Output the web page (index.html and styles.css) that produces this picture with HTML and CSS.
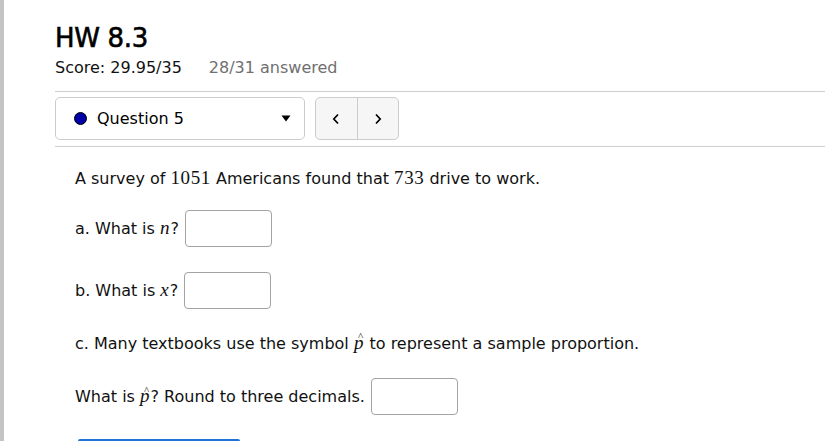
FILE: index.html
```html
<!DOCTYPE html>
<html lang="en">
<head>
<meta charset="utf-8">
<title>HW 8.3</title>
<link rel="stylesheet" href="styles.css">
</head>
<body>
<div class="frame">
  <div class="sidebar"></div>
  <main class="page">
    <h1 class="title">HW 8.3</h1>
    <div class="score">Score: 29.95/35<span class="answered">28/31 answered</span></div>
    <hr class="rule">
    <div class="qnav">
      <div class="qselect">
        <span class="dot"></span>
        <span class="qlabel">Question 5</span>
        <svg class="caret" width="10" height="7" viewBox="0 0 10 7"><polygon points="0.5,0.5 9.5,0.5 5,6.5" fill="#000"/></svg>
      </div>
      <div class="arrows">
        <button class="arrow" type="button" aria-label="Previous"><svg width="8" height="12" viewBox="0 0 8 12"><polyline points="6,1.5 1.8,6 6,10.5" fill="none" stroke="#000" stroke-width="1.7"/></svg></button>
        <button class="arrow arrow-next" type="button" aria-label="Next"><svg width="8" height="12" viewBox="0 0 8 12"><polyline points="2,1.5 6.2,6 2,10.5" fill="none" stroke="#000" stroke-width="1.7"/></svg></button>
      </div>
    </div>
    <hr class="rule rule-2">
    <div class="question">
      <p class="line first">A survey of <span class="num">1051</span> Americans found that <span class="num">733</span> drive to work.</p>
      <div class="row row-a"><span>a. What is <span class="mi">n</span>?</span><input class="answer" type="text"></div>
      <div class="row row-b"><span>b. What is <span class="mi">x</span>?</span><input class="answer" type="text"></div>
      <p class="line row-c">c. Many textbooks use the symbol <span class="mi hat">p</span> to represent a sample proportion.</p>
      <div class="row row-d"><span>What is <span class="mi hat">p</span>? Round to three decimals.</span><input class="answer" type="text"></div>
      <button class="submit" type="button"></button>
    </div>
  </main>
</div>
</body>
</html>
```
FILE: styles.css
```css
html, body {
  margin: 0;
  padding: 0;
  background: #fff;
}
body {
  width: 825px;
  height: 441px;
  overflow: hidden;
  font-family: "DejaVu Sans", sans-serif;
  font-size: 16px;
  line-height: 20px;
  color: #111;
}
.frame {
  display: flex;
  height: 441px;
  overflow: hidden;
}
.sidebar {
  width: 4px;
  flex: none;
  background: #c4c4c4;
}
.page {
  flex: 1;
  padding-left: 51px;
  overflow: hidden;
}
.title {
  margin: 23px 0 0;
  font-size: 26px;
  line-height: 30px;
  font-weight: normal;
  color: #000;
  -webkit-text-stroke: 0.6px #000;
  letter-spacing: -0.3px;
}
.score {
  margin-top: 5px;
  line-height: 20px;
  color: #111;
}
.answered {
  margin-left: 27px;
  color: #707070;
}
.rule {
  border: 0;
  border-top: 1px solid #cfcfcf;
  height: 0;
  margin: 13px 0 0;
}
.rule-2 {
  margin-top: 6px;
}
.qnav {
  margin-top: 5px;
  display: flex;
  gap: 10px;
  height: 43px;
}
.qselect {
  width: 250px;
  box-sizing: border-box;
  display: flex;
  align-items: center;
  padding: 0 13px 0 18px;
  border: 1px solid #cccccc;
  border-radius: 5px;
  background: #fff;
}
.dot {
  width: 11px;
  height: 11px;
  border-radius: 50%;
  background: #0000a6;
  border: 1px solid #000;
  margin-right: 10px;
  flex: none;
}
.qlabel {
  flex: 1;
  color: #000;
}
.caret {
  flex: none;
  display: block;
}
.arrows {
  display: flex;
  width: 84px;
  box-sizing: border-box;
  border: 1px solid #cccccc;
  border-radius: 5px;
  background: #f6f6f6;
  overflow: hidden;
}
.arrow {
  flex: 1;
  border: 0;
  margin: 0;
  padding: 0;
  background: transparent;
  display: flex;
  align-items: center;
  justify-content: center;
}
.arrow-next {
  border-left: 1px solid #cccccc;
}
.arrow svg {
  display: block;
}
.question {
  padding-left: 20px;
}
.line {
  margin: 0;
  line-height: 20px;
}
.first {
  margin-top: 21px;
}
.row {
  display: flex;
  align-items: center;
  height: 37px;
}
.row-a {
  margin-top: 21px;
}
.row-b {
  margin-top: 25px;
}
.row-c {
  margin-top: 23.5px;
}
.row-d {
  margin-top: 24.5px;
}
.num {
  font-family: "Liberation Serif", serif;
  font-size: 19px;
  line-height: 1;
  letter-spacing: 0.6px;
}
.mi {
  font-family: "Liberation Serif", serif;
  font-style: italic;
  font-size: 19px;
  line-height: 1;
  padding-right: 1px;
}
.hat {
  position: relative;
  display: inline-block;
}
.hat::after {
  content: "^";
  position: absolute;
  left: 4px;
  top: -1.5px;
  font-style: normal;
  font-size: 11px;
}
.answer {
  width: 87px;
  height: 37px;
  box-sizing: border-box;
  margin: 0 0 0 6px;
  border: 1px solid #a3a3a3;
  border-radius: 4px;
  background: #fff;
  padding: 0;
  font: inherit;
}
.submit {
  display: block;
  margin: 24px 0 0 3px;
  width: 162px;
  height: 2px;
  padding: 0;
  border: 0;
  border-radius: 3px 3px 0 0;
  background: #1d73d8;
}
```
